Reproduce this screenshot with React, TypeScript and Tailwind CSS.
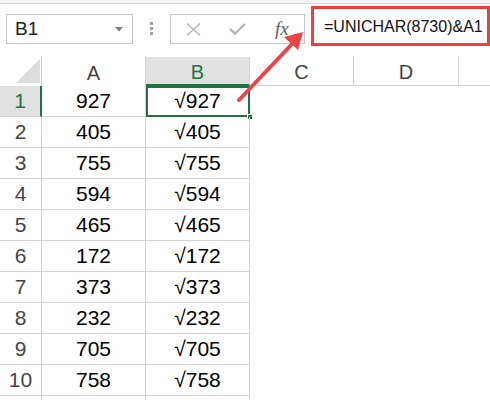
const rows: [number, string][] = [
  [1, "927"],
  [2, "405"],
  [3, "755"],
  [4, "594"],
  [5, "465"],
  [6, "172"],
  [7, "373"],
  [8, "232"],
  [9, "705"],
  [10, "758"],
];

export default function App() {
  return (
    <div className="relative h-[400px] w-[490px] overflow-hidden bg-white font-['Liberation_Sans',Arial,sans-serif]">
      {/* ribbon edge */}
      <div className="h-[4px] border-b border-[#d9d9d9] bg-[#f3f3f3]" />

      {/* formula bar */}
      <div className="flex h-[52px] items-start">
        <div className="ml-[6px] mt-[10px] flex h-[30px] w-[127px] items-center justify-between border border-[#c6c6c6] pl-[8px] pr-[9px]">
          <span className="text-[19px] text-[#222]">B1</span>
          <svg width="8" height="5" viewBox="0 0 8 5">
            <polygon points="0,0 8,0 4,4.5" fill="#808080" />
          </svg>
        </div>

        <div className="ml-[17px] mt-[18px] flex flex-col gap-[2px]">
          <span className="h-[3px] w-[3px] bg-[#a0a0a0]" />
          <span className="h-[3px] w-[3px] bg-[#a0a0a0]" />
          <span className="h-[3px] w-[3px] bg-[#a0a0a0]" />
        </div>

        <div className="ml-[17px] mt-[10px] flex h-[30px] w-[135px] items-center border border-[#c6c6c6]">
          <div className="flex w-[45px] justify-center">
            <svg width="15" height="13" viewBox="0 0 15 13">
              <path d="M1 0.5 L14 12.5 M14 0.5 L1 12.5" stroke="#b4b4b4" strokeWidth="1.4" />
            </svg>
          </div>
          <div className="flex w-[45px] justify-center">
            <svg width="17" height="12" viewBox="0 0 17 12">
              <path d="M1 6 L6 10.5 L16 1" stroke="#b4b4b4" strokeWidth="2.4" fill="none" />
            </svg>
          </div>
          <div className="flex w-[45px] justify-center">
            <span className="font-['Liberation_Serif',serif] text-[19px] italic text-[#606060]">fx</span>
          </div>
        </div>

        <div className="ml-[6px] mt-[2px] flex h-[40px] w-[179px] items-center border-[3px] border-[#ee3e3e] pl-[10px] pt-[1px]">
          <span className="whitespace-nowrap text-[16px] text-[#111]">=UNICHAR(8730)&amp;A1</span>
        </div>
      </div>

      {/* column headers */}
      <div className="flex h-[30px] text-[20px] text-[#444]">
        <div className="relative w-[42px] border-r border-[#d4d4d4]">
          <svg className="absolute left-[16px] top-[3px]" width="24" height="24" viewBox="0 0 24 24">
            <polygon points="24,0 24,24 0,24" fill="#dcdcdc" />
          </svg>
        </div>
        <div className="flex w-[104px] items-center justify-center border-r border-[#d4d4d4] pt-[3px]">A</div>
        <div className="mt-[1px] flex w-[104px] items-center justify-center border-b-2 border-r border-b-[#217346] border-r-[#d4d4d4] bg-[#e1e1e1] pt-[2px] text-[#217346]">
          B
        </div>
        <div className="flex w-[104px] items-center justify-center border-b border-r border-[#d4d4d4] pt-[3px]">C</div>
        <div className="flex w-[105px] items-center justify-center border-b border-r border-[#d4d4d4] pt-[3px]">D</div>
        <div className="flex-1 border-b border-[#d4d4d4]" />
      </div>

      {/* data rows */}
      {rows.map(([n, v]) => (
        <div key={n} className="flex h-[31px] text-[21px]">
          <div
            className={
              n === 1
                ? "flex w-[42px] items-center justify-center border-b border-r-2 border-b-[#d4d4d4] border-r-[#217346] bg-[#e1e1e1] text-[#217346]"
                : "flex w-[42px] items-center justify-center border-b border-r border-[#d4d4d4] text-[#444]"
            }
          >
            {n}
          </div>
          <div className="flex w-[104px] items-center justify-center border-b border-r border-[#d4d4d4] text-black">
            {v}
          </div>
          <div className="relative flex w-[104px] items-center justify-center border-b border-r border-[#d4d4d4] text-black">
            {"\u221A" + v}
            {n === 1 && (
              <>
                <span className="absolute -bottom-px -right-px left-0 top-0 border-2 border-[#217346]" />
                <span className="absolute -bottom-[4px] -right-[4px] h-[6px] w-[6px] border border-white bg-[#217346]" />
              </>
            )}
          </div>
        </div>
      ))}
      <div className="flex h-[10px]">
        <div className="w-[42px] border-r border-[#d4d4d4]" />
        <div className="w-[104px] border-r border-[#d4d4d4]" />
        <div className="w-[104px] border-r border-[#d4d4d4]" />
      </div>

      {/* annotation arrow */}
      <svg className="pointer-events-none absolute left-0 top-0" width="490" height="400" viewBox="0 0 490 400">
        <line x1="239" y1="100" x2="292" y2="44" stroke="#ef4444" strokeWidth="4" strokeLinecap="round" />
        <polygon points="303,32 298,50 284,37" fill="#ef4444" />
      </svg>
    </div>
  );
}
